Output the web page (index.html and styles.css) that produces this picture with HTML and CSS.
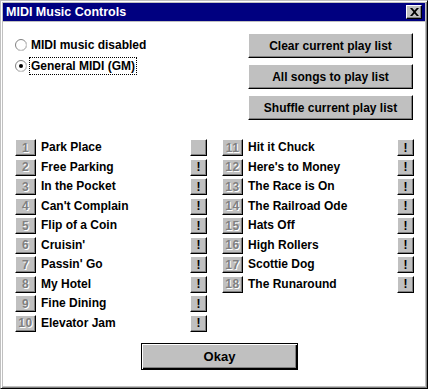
FILE: index.html
```html
<!DOCTYPE html>
<html lang="en">
<head>
    <meta charset="UTF-8">
    <title>MIDI Music Controls</title>
    <link rel="stylesheet" href="styles.css">
</head>
<body>
    <div class="window">
        <div class="titlebar">
            <span class="title">MIDI Music Controls</span>
            <button class="close-btn">
                <svg width="9" height="8" viewBox="0 0 9 8"><path d="M0 0h2.2l2.3 2.6 2.3-2.6h2.2l-3.4 4 3.4 4h-2.2l-2.3-2.6-2.3 2.6h-2.2l3.4-4z"/></svg>
            </button>
        </div>
        <div class="client">
            <div class="top">
                <div class="radios">
                    <div class="radio">
                        <svg width="12" height="12" viewBox="0 0 12 12">
                            <circle cx="6" cy="6" r="5.5" fill="#fff" stroke="#808080"/>
                            <path d="M9.9 2.1A5.5 5.5 0 0 1 2.1 9.9" fill="none" stroke="#d4d4d4"/>
                        </svg>
                        <span class="label">MIDI music disabled</span>
                    </div>
                    <div class="radio">
                        <svg width="12" height="12" viewBox="0 0 12 12">
                            <circle cx="6" cy="6" r="5.5" fill="#fff" stroke="#808080"/>
                            <path d="M9.9 2.1A5.5 5.5 0 0 1 2.1 9.9" fill="none" stroke="#d4d4d4"/>
                            <circle cx="6" cy="6" r="2" fill="#000"/>
                        </svg>
                        <span class="label focus">General MIDI (GM)</span>
                    </div>
                </div>
                <div class="actions">
                    <button class="btn action">Clear current play list</button>
                    <button class="btn action">All songs to play list</button>
                    <button class="btn action">Shuffle current play list</button>
                </div>
            </div>

            <div class="songs">
                <div class="song-col" id="colLeft"></div>
                <div class="song-col" id="colRight"></div>
            </div>

            <button class="btn okay">Okay</button>
        </div>
    </div>

    <script>
        const songs = [
            'Park Place', 'Free Parking', 'In the Pocket', "Can't Complain", 'Flip of a Coin',
            "Cruisin'", "Passin' Go", 'My Hotel', 'Fine Dining', 'Elevator Jam',
            'Hit it Chuck', "Here's to Money", 'The Race is On', 'The Railroad Ode', 'Hats Off',
            'High Rollers', 'Scottie Dog', 'The Runaround'
        ];
        const colLeft = document.getElementById('colLeft');
        const colRight = document.getElementById('colRight');

        songs.forEach((name, i) => {
            const row = document.createElement('div');
            row.className = 'song-row';
            // first song is the one playing, so its button is blank
            const mark = i === 0 ? '' : '!';
            row.innerHTML = `
                <button class="btn num">${i + 1}</button>
                <span class="song-name">${name}</span>
                <button class="btn play">${mark}</button>
            `;
            (i < 10 ? colLeft : colRight).appendChild(row);
        });
    </script>
</body>
</html>
```

FILE: styles.css
```css
* {
    box-sizing: border-box;
}
body {
    margin: 0;
    font-family: "Liberation Sans", Arial, sans-serif;
    font-size: 12px;
    font-weight: bold;
    background-color: #c0c0c0;
}
.window {
    width: 428px;
    height: 389px;
    padding: 2px;
    background-color: #c0c0c0;
    border: 1px solid;
    border-color: #c0c0c0 #000 #000 #c0c0c0;
    box-shadow: inset 1px 1px #fff, inset -1px -1px #808080;
    display: flex;
    flex-direction: column;
}
.titlebar {
    height: 18px;
    background-color: #000080;
    color: #fff;
    display: flex;
    align-items: center;
    justify-content: space-between;
    padding: 0 3px 0 3px;
}
.title {
    font-size: 12.5px;
}
.close-btn {
    width: 16px;
    height: 14px;
    padding: 0;
    background-color: #c0c0c0;
    border: 1px solid;
    border-color: #fff #000 #000 #fff;
    box-shadow: inset -1px -1px #808080;
    display: flex;
    align-items: center;
    justify-content: center;
}
.client {
    flex: 1;
    margin-top: 1px;
    background-color: #fff;
    padding: 11px 11px 0 12px;
}
.top {
    display: flex;
    justify-content: space-between;
}
.radios {
    display: flex;
    flex-direction: column;
    gap: 3px;
    margin-top: 3px;
}
.radio {
    height: 18px;
    display: flex;
    align-items: center;
    gap: 2px;
}
.label {
    padding: 1px 1px;
    border: 1px solid transparent;
}
.label.focus {
    border: 1px dotted #000;
}
.actions {
    display: flex;
    flex-direction: column;
    gap: 6px;
    margin-right: 1px;
}
.btn {
    font-family: inherit;
    font-weight: bold;
    font-size: 12px;
    color: #000;
    padding: 0;
    background-color: #c0c0c0;
    border: 1px solid;
    border-color: #fff #000 #000 #fff;
    box-shadow: inset -1px -1px #808080;
}
.action {
    width: 165px;
    height: 25px;
}
.songs {
    display: flex;
    gap: 15px;
    margin-top: 19px;
}
.song-col {
    width: 192px;
    display: grid;
    grid-auto-rows: 19.5px;
}
.song-row {
    display: grid;
    grid-template-columns: 21px 1fr 17px;
    column-gap: 5px;
    align-items: start;
}
.num {
    height: 17px;
    font-size: 12px;
    color: #808080;
    text-shadow: 1px 1px #fff;
    letter-spacing: 0.5px;
}
.song-name {
    line-height: 17px;
    white-space: nowrap;
}
.play {
    height: 17px;
    font-size: 12px;
}
.okay {
    display: block;
    width: 157px;
    height: 27px;
    margin: 9px 0 0 126px;
    font-size: 13px;
    border: 1px solid #000;
    box-shadow: inset 1px 1px #fff, inset -1px -1px #000, inset -2px -2px #808080;
}
```
